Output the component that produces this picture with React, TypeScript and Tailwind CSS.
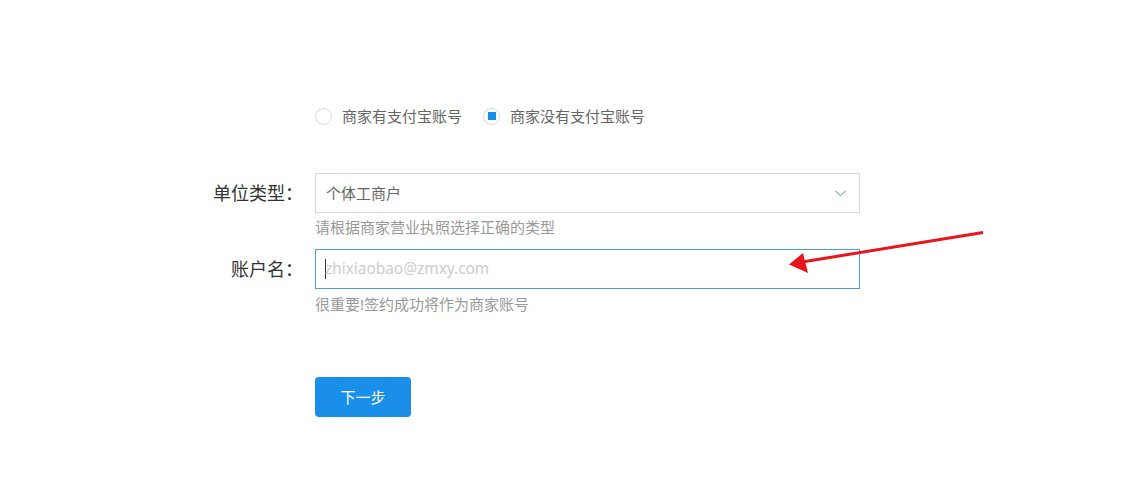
import React from "react";

const font = { fontFamily: '"Noto Sans", "Noto Sans CJK SC", sans-serif' };

function Radio({ checked, label }: { checked?: boolean; label: string }) {
  return (
    <div className="flex items-center">
      <span className="flex h-[17px] w-[17px] items-center justify-center rounded-full border border-[#d9d9d9] bg-white">
        {checked && <span className="block h-[8px] w-[8px] bg-[#1a8de9]" />}
      </span>
      <span className="ml-[10px] text-[15px] leading-[20px] text-[#666]">{label}</span>
    </div>
  );
}

export default function App() {
  return (
    <div className="relative h-[491px] w-[1146px] overflow-hidden bg-white" style={font}>
      <div className="flex flex-col pl-[190px] pt-[96px]">
        <div className="flex h-[40px] items-center">
          <div className="w-[125px]" />
          <div className="flex items-center gap-[21px]">
            <Radio label="商家有支付宝账号" />
            <Radio checked label="商家没有支付宝账号" />
          </div>
        </div>

        <div className="mt-[37px] flex items-center">
          <div className="w-[113px] text-right text-[18px] leading-[24px] text-[#333]">单位类型：</div>
          <div className="ml-[12px] flex h-[40px] w-[545px] items-center justify-between border border-[#d9d9d9] pl-[10px] pr-[13px]">
            <span className="text-[15px] leading-[20px] text-[#666]">个体工商户</span>
            <svg width="11" height="7" viewBox="0 0 11 7">
              <polyline points="0.5,0.8 5.5,5.8 10.5,0.8" fill="none" stroke="#8fa6c6" strokeWidth="1.1" />
            </svg>
          </div>
        </div>
        <div className="ml-[125px] mt-[4px] text-[15px] leading-[20px] text-[#999]">请根据商家营业执照选择正确的类型</div>

        <div className="mt-[12px] flex items-center">
          <div className="w-[113px] text-right text-[18px] leading-[24px] text-[#333]">账户名：</div>
          <div className="ml-[12px] flex h-[40px] w-[545px] items-center border border-[#4a9fe0] pl-[9px]">
            <span className="block h-[20px] w-px bg-[#333]" />
            <span className="ml-[-1px] text-[15.4px] leading-[20px] text-[#ccc]">zhixiaobao@zmxy.com</span>
          </div>
        </div>
        <div className="ml-[125px] mt-[5px] text-[15px] leading-[20px] text-[#999]">很重要!签约成功将作为商家账号</div>

        <div className="ml-[125px] mt-[63px]">
          <button className="flex h-[40px] w-[96px] items-center justify-center rounded-[4px] bg-[#1a8fe9] text-[15px] text-white">
            下一步
          </button>
        </div>
      </div>

      <svg className="pointer-events-none absolute left-0 top-0" width="1146" height="491" viewBox="0 0 1146 491">
        <line x1="983" y1="232.5" x2="802" y2="262" stroke="#e8161e" strokeWidth="3" />
        <polygon points="789,264.5 803,253 808,273" fill="#e8161e" />
      </svg>
    </div>
  );
}
